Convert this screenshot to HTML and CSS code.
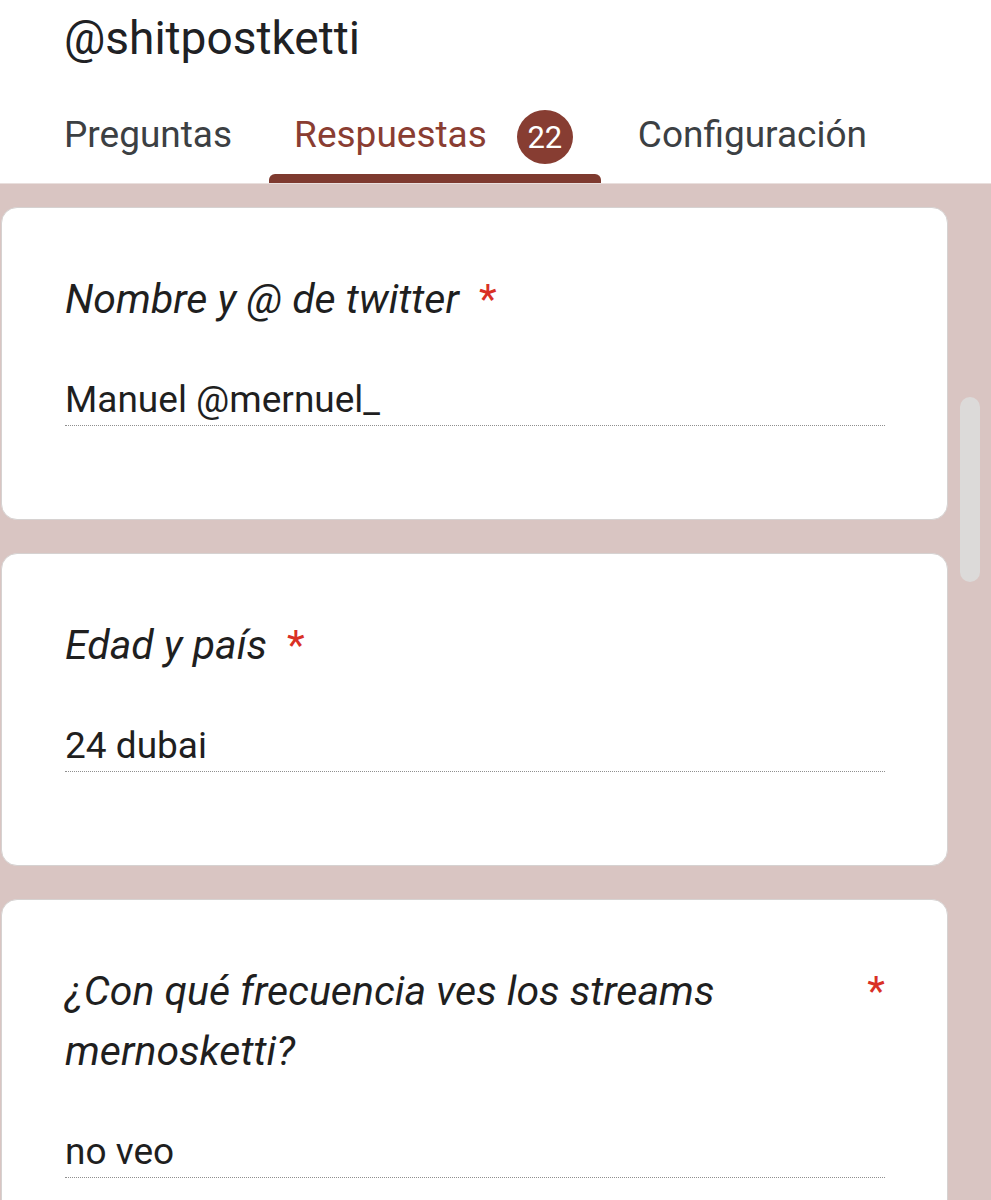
FILE: index.html
```html
<!DOCTYPE html>
<html lang="es">
<head>
<meta charset="utf-8">
<title>@shitpostketti - Respuestas</title>
<link rel="stylesheet" href="styles.css">
</head>
<body>
<header class="header">
  <h1 class="form-title">@shitpostketti</h1>
  <nav class="tabs">
    <div class="tab">
      <span class="tab-label">Preguntas</span>
      <span class="tab-bar"></span>
    </div>
    <div class="tab tab-active">
      <span class="tab-label"><span>Respuestas</span><span class="badge">22</span></span>
      <span class="tab-bar"></span>
    </div>
    <div class="tab">
      <span class="tab-label">Configuración</span>
      <span class="tab-bar"></span>
    </div>
  </nav>
</header>
<main class="content">
  <section class="card">
    <div class="question">
      <span class="question-text">Nombre y @ de twitter</span>
      <span class="required">*</span>
    </div>
    <div class="answer">Manuel @mernuel_</div>
  </section>
  <section class="card">
    <div class="question">
      <span class="question-text">Edad y país</span>
      <span class="required">*</span>
    </div>
    <div class="answer">24 dubai</div>
  </section>
  <section class="card">
    <div class="question">
      <span class="question-text">¿Con qué frecuencia ves los streams mernosketti?</span>
      <span class="required">*</span>
    </div>
    <div class="answer">no veo</div>
  </section>
</main>
<div class="scroll-thumb"></div>
</body>
</html>
```

FILE: styles.css
```css
html, body {
  margin: 0;
  padding: 0;
}
body {
  background: #d9c5c2;
  font-family: Roboto, "Noto Sans", Arial, sans-serif;
  color: #202124;
  overflow: hidden;
}
.header {
  background: #ffffff;
  padding: 3px 0 0 64px;
  border-bottom: 1px solid #e9dfdd;
}
.form-title {
  margin: 0;
  font-weight: 400;
  font-size: 46px;
  line-height: 70px;
  color: #202124;
  letter-spacing: 0;
}
.tabs {
  display: flex;
  gap: 12px;
  margin-left: -25px;
  margin-top: 22px;
}
.tab {
  display: flex;
  flex-direction: column;
  height: 88px;
  box-sizing: border-box;
  padding: 18px 25px 0 25px;
  color: #3c4043;
}
.tab-label {
  display: flex;
  align-items: center;
  height: 44px;
  font-size: 37px;
  line-height: 44px;
  white-space: nowrap;
  letter-spacing: 0;
}
.tab-bar {
  margin-top: auto;
  height: 9px;
  border-radius: 6px 6px 0 0;
}
.tab-active {
  color: #8a3d32;
  padding-right: 28px;
}
.tab-active .tab-bar {
  background: #7e3a2f;
  margin-left: -25px;
  margin-right: -28px;
}
.badge {
  display: inline-flex;
  align-items: center;
  justify-content: center;
  width: 56px;
  height: 54px;
  margin: -3px 0 -7px 30px;
  border-radius: 50%;
  background: #873d32;
  color: #ffffff;
  font-size: 31px;
  line-height: 1;
  letter-spacing: 0;
}
.content {
  padding-top: 23px;
}
.card {
  background: #ffffff;
  border: 1px solid #d6d2d1;
  border-radius: 16px;
  margin: 0 43px 33px 1px;
  padding: 61px 62px 93px 63px;
}
.question {
  display: flex;
  align-items: flex-start;
  font-size: 41px;
  line-height: 60px;
  font-style: italic;
  color: #1f1f1f;
}
.question-text {
  flex: 0 1 auto;
}
.required {
  flex: none;
  margin-left: 20px;
  color: #d93025;
  font-style: normal;
}
.answer {
  margin-top: 49px;
  font-size: 37px;
  line-height: 44px;
  padding-bottom: 3px;
  border-bottom: 1px dotted #8f8f8f;
  color: #1f1f1f;
}
.scroll-thumb {
  position: fixed;
  top: 397px;
  right: 11px;
  width: 20px;
  height: 185px;
  border-radius: 10px;
  background: #dcdad9;
}
```
